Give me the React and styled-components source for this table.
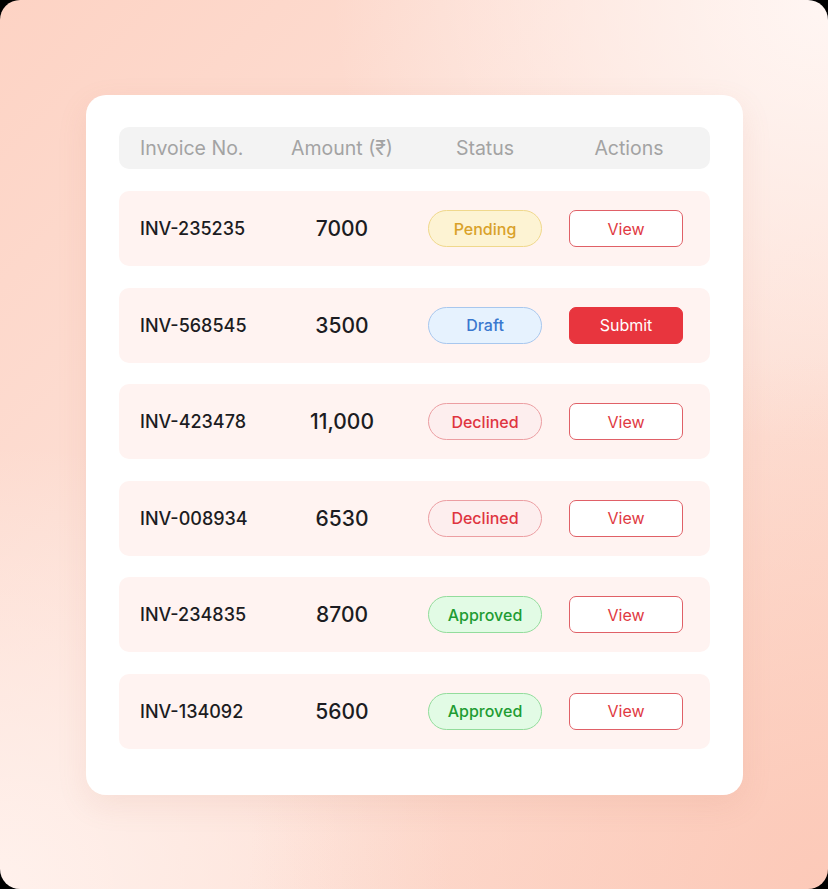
import styled, { createGlobalStyle } from 'styled-components';

const GlobalStyle = createGlobalStyle`
  html, body {
    margin: 0;
    background: #000;
  }
  body {
    font-family: Inter, "Noto Sans", sans-serif;
  }
`;

const Backdrop = styled.div`
  width: 828px;
  height: 889px;
  box-sizing: border-box;
  border-radius: 20px;
  background:
    radial-gradient(ellipse 70% 60% at 100% 100%, #fcc9b8 0%, rgba(252, 201, 184, 0) 100%),
    radial-gradient(ellipse 60% 50% at 100% 0%, #fff6f3 0%, rgba(255, 246, 243, 0) 100%),
    radial-gradient(ellipse 55% 50% at 0% 100%, #fff1ec 0%, rgba(255, 241, 236, 0) 100%),
    linear-gradient(135deg, #fdd3c4 0%, #fde2d9 50%, #fdd8ca 100%);
  padding: 95px 85px 0 86px;
`;

const Card = styled.div`
  width: 657px;
  height: 700px;
  box-sizing: border-box;
  background: #fff;
  border-radius: 20px;
  box-shadow: 0 10px 30px rgba(200, 120, 100, 0.12);
  padding: 32px 33px 0 33px;
  display: flex;
  flex-direction: column;
  gap: 22px;
`;

const columns = `
  display: grid;
  grid-template-columns: 132px 140px 146px 136px;
  align-items: center;
  padding-left: 21px;
  box-sizing: border-box;
`;

const HeaderBar = styled.div`
  ${columns}
  height: 42px;
  background: #f3f3f3;
  border-radius: 10px;
`;

const HeadCell = styled.div`
  font-size: 19.5px;
  color: #a3a3a3;
  font-weight: 400;
  text-align: ${(p) => (p.$left ? 'left' : 'center')};
  padding-left: ${(p) => (p.$shift ? '6px' : '0')};
`;

const Rows = styled.div`
  display: flex;
  flex-direction: column;
  gap: 21.5px;
`;

const Row = styled.div`
  ${columns}
  height: 75px;
  background: #fff3f1;
  border-radius: 10px;
`;

const InvoiceNo = styled.div`
  font-size: 18px;
  font-weight: 500;
  color: #1c1c22;
`;

const Amount = styled.div`
  font-size: 21px;
  font-weight: 500;
  color: #1c1c22;
  text-align: center;
`;

const Cell = styled.div`
  display: flex;
  justify-content: center;
`;

const statusStyles = {
  Pending: { bg: '#fdf3d3', border: '#f0d88c', color: '#d9a12a' },
  Draft: { bg: '#e6f2fe', border: '#a8c7ee', color: '#3a78cf' },
  Declined: { bg: '#fdeeee', border: '#ec9ea2', color: '#df3540' },
  Approved: { bg: '#e2fbe5', border: '#93dc9c', color: '#1f9c33' },
};

const StatusPill = styled.span`
  width: 114px;
  height: 37px;
  box-sizing: border-box;
  border-radius: 19px;
  display: flex;
  align-items: center;
  justify-content: center;
  font-size: 16px;
  font-weight: 500;
  background: ${(p) => statusStyles[p.$status].bg};
  border: 1px solid ${(p) => statusStyles[p.$status].border};
  color: ${(p) => statusStyles[p.$status].color};
`;

const ActionButton = styled.button`
  width: 114px;
  height: 37px;
  box-sizing: border-box;
  border-radius: 7px;
  font-family: inherit;
  font-size: 16px;
  font-weight: 400;
  cursor: pointer;
  background: ${(p) => (p.$primary ? '#e8353e' : '#fff')};
  color: ${(p) => (p.$primary ? '#fff' : '#e03a43')};
  border: 1.5px solid ${(p) => (p.$primary ? '#e8353e' : '#e06067')};
`;

const invoices = [
  { id: 'INV-235235', amount: '7000', status: 'Pending' },
  { id: 'INV-568545', amount: '3500', status: 'Draft' },
  { id: 'INV-423478', amount: '11,000', status: 'Declined' },
  { id: 'INV-008934', amount: '6530', status: 'Declined' },
  { id: 'INV-234835', amount: '8700', status: 'Approved' },
  { id: 'INV-134092', amount: '5600', status: 'Approved' },
];

function App() {
  return (
    <>
      <GlobalStyle />
      <Backdrop>
        <Card>
          <HeaderBar>
            <HeadCell $left>Invoice No.</HeadCell>
            <HeadCell>Amount (₹)</HeadCell>
            <HeadCell>Status</HeadCell>
            <HeadCell $shift>Actions</HeadCell>
          </HeaderBar>
          <Rows>
            {invoices.map((inv) => (
              <Row key={inv.id}>
                <InvoiceNo>{inv.id}</InvoiceNo>
                <Amount>{inv.amount}</Amount>
                <Cell>
                  <StatusPill $status={inv.status}>{inv.status}</StatusPill>
                </Cell>
                <Cell>
                  {inv.status === 'Draft' ? (
                    <ActionButton $primary>Submit</ActionButton>
                  ) : (
                    <ActionButton>View</ActionButton>
                  )}
                </Cell>
              </Row>
            ))}
          </Rows>
        </Card>
      </Backdrop>
    </>
  );
}

export default App;
